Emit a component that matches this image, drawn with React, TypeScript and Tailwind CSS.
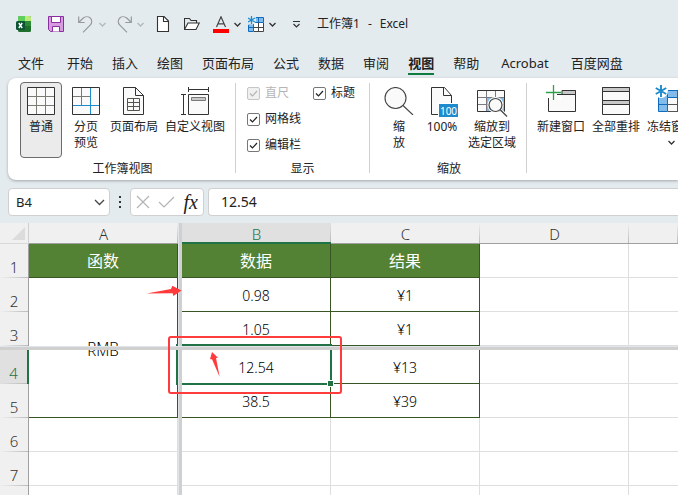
import { ReactNode } from "react";
import clsx from "clsx";

const tabs = ["文件", "开始", "插入", "绘图", "页面布局", "公式", "数据", "审阅", "视图", "帮助", "Acrobat", "百度网盘"];

const rows = [
  { n: 1, b: "数据", c: "结果" },
  { n: 2, b: "0.98", c: "¥1" },
  { n: 3, b: "1.05", c: "¥1" },
  { n: 4, b: "12.54", c: "¥13" },
  { n: 5, b: "38.5", c: "¥39" },
  { n: 6, b: "", c: "" },
  { n: 7, b: "", c: "" },
  { n: 8, b: "", c: "" },
];

function Chevron({ className = "text-[#333]" }: { className?: string }) {
  return (
    <svg className={className} width="7" height="7" viewBox="0 0 7 7" fill="none" stroke="currentColor" strokeWidth="1.3">
      <path d="M.5 2l3 3 3-3" />
    </svg>
  );
}

/* ---------- quick access icons ---------- */

function ExcelLogo() {
  return (
    <svg width="16" height="16" viewBox="0 0 16 16">
      <rect x="2" y="0" width="13" height="16" rx="1.5" fill="#1e6f2c" />
      <path d="M3.500 0H9v5H2V1.500A1.500 1.500 0 0 1 3.500 0z" fill="#5fce5a" />
      <path d="M9 0h4.500A1.500 1.500 0 0 1 15 1.500V5H9z" fill="#bdea7b" />
      <path d="M9 5h6v5H9z" fill="#2c8a36" />
      <rect x="0" y="5" width="9" height="9" rx="1.500" fill="#0d5434" />
      <path d="M2.800 7l3.400 5M6.200 7l-3.400 5" stroke="#fff" strokeWidth="1.400" />
    </svg>
  );
}

function SaveIcon() {
  return (
    <svg width="16" height="16" viewBox="0 0 16 16" fill="#d79be0" stroke="#8b2fa0">
      <path d="M.5.5h15v15H2.500l-2-2z" />
      <path d="M3.500.5h9v6h-9z" fill="#fff" />
      <path d="M4.500 15.500v-5h7v5" fill="#fff" />
    </svg>
  );
}

function UndoIcon({ flip }: { flip?: boolean }) {
  return (
    <svg className={clsx(flip && "-scale-x-100")} width="16" height="17" viewBox="0 0 16 17" fill="none" stroke="#969a9d" strokeWidth="1.200">
      <path d="M.7.5v6h6" />
      <path d="M.9 6.300L5 2.300C7 .4 10.200.200 12.200 2s2 4.900.200 6.800L5 16.300" />
    </svg>
  );
}

function NewFileIcon() {
  return (
    <svg width="16" height="16" viewBox="0 0 16 16" fill="#fff" stroke="#333" strokeWidth="1.100">
      <path d="M2.500.5H9l4.500 4.500v10.500h-11z" />
      <path d="M8.500.5v5h5" fill="none" />
    </svg>
  );
}

function OpenIcon() {
  return (
    <svg width="16" height="16" viewBox="0 0 16 16" fill="none" stroke="#333" strokeWidth="1.100">
      <path d="M.5 13.500v-11h5l1.500 2h5.500v2.500" />
      <path d="M.5 13.500l3.500-6.500h11.300l-3.300 6.500z" fill="#fff" />
    </svg>
  );
}

function FontColorIcon() {
  return (
    <svg width="16" height="17" viewBox="0 0 16 17">
      <path d="M3.500 11L8 .8 12.500 11M5 7.800h6" fill="none" stroke="#444" strokeWidth="1.200" />
      <rect y="13" width="16" height="4" fill="#f00" />
    </svg>
  );
}

function Snowflake({ x, y, r }: { x: number; y: number; r: number }) {
  return (
    <g transform={`translate(${x} ${y}) scale(${r})`} stroke="#1e8bcd" strokeWidth=".32">
      <path d="M0-1V1M-.87-.5L.87.5M-.87.5L.87-.5" />
    </g>
  );
}

function FreezeSmallIcon() {
  return (
    <svg width="16" height="16" viewBox="0 0 16 16">
      <path d="M1 1.500h14.500v5H5.500v8.500H.5V8z" fill="#83bceb" />
      <path d="M5.500 6.500h10v9h-10z" fill="#fff" />
      <path d="M8 1.500h7.500v5H5.500v9h-5V9M10.500 1.500v5M.5 11.500h5" fill="none" stroke="#0f6cbd" />
      <path d="M10.500 6.500v9M5.500 11.500h10M15.500 7v8.500H6" fill="none" stroke="#444" />
      <circle cx="3.500" cy="4" r="4.500" fill="#e4ebef" />
      <Snowflake x={3.5} y={4} r={4} />
    </svg>
  );
}

/* ---------- ribbon icons, all 28px high ---------- */

function NormalIcon() {
  return (
    <svg width="28" height="28" viewBox="0 0 28 28" fill="#fafafa">
      <path d="M.5.5h27v27H.5z" />
      <path d="M9.500 1v26M18.500 1v26M1 9.500h26M1 18.500h26" stroke="#7a7a72" />
      <path d="M.5.5h27v27H.5z" fill="none" stroke="#333" />
    </svg>
  );
}

function PageBreakIcon() {
  return (
    <svg width="28" height="28" viewBox="0 0 28 28" fill="#fafafa">
      <path d="M.5.5h27v27H.5z" />
      <path d="M9.500 1v17M1 9.500h17" stroke="#7a7a72" />
      <path d="M.5.5h27v27H.5z" fill="none" stroke="#333" />
      <path d="M18.500 1v26M1 18.500h26" stroke="#1e8bcd" />
    </svg>
  );
}

function PageLayoutIcon() {
  return (
    <svg width="28" height="28" viewBox="0 0 28 28" fill="#fafafa" stroke="#333">
      <path d="M3.500.5h12l8 8v19h-20z" />
      <path d="M15.500.5v8h8" fill="none" />
      <path d="M7.500 11.500h12v12h-12zM13.500 11.500v12M7.500 15.500h12M7.500 19.500h12" stroke="#55554e" />
    </svg>
  );
}

function CustomViewIcon() {
  return (
    <svg width="28" height="28" viewBox="0 0 28 28" fill="none" stroke="#333">
      <path d="M7.500 7.500h20v20h-20z" fill="#fafafa" />
      <path d="M10.500 10.500h14v3h-14z" fill="#c8c8c8" stroke="#7a7a7a" />
      <path d="M7.500 2.500h20M7.500 0v5M27.500 0v5M2.500 7.500v20M0 7.500h5M0 27.500h5" />
    </svg>
  );
}

function ZoomIcon() {
  return (
    <svg width="30" height="28" viewBox="0 0 30 28" fill="#fafafa" stroke="#444" strokeWidth="1.100">
      <circle cx="11.500" cy="11" r="10.500" />
      <path d="M19 18.500l10 9.500" />
    </svg>
  );
}

function Zoom100Icon() {
  return (
    <svg width="32" height="30" viewBox="0 0 32 30" fill="#fafafa" stroke="#333">
      <path d="M5.500 27.500V.5h13l7 8v19z" />
      <path d="M17.500.5v8h8" fill="none" />
      <path d="M12 16h20v14H12z" fill="#fff" stroke="none" />
      <path d="M13 17h19v13H13z" fill="#1e8bcd" stroke="none" />
      <text x="22.500" y="27.500" textAnchor="middle" fontSize="10" fill="#fff" stroke="none">100</text>
    </svg>
  );
}

function ZoomSelectionIcon() {
  return (
    <svg width="30" height="28" viewBox="0 0 30 28" fill="#fafafa" className="overflow-visible">
      <path d="M.5 3.500h27v21H.5z" />
      <path d="M10 10.500h17.500v14H10z" fill="#83bceb" />
      <path d="M9.500 3.500v21M18.500 3.500v21M.5 10.500h27M.5 17.500h27" stroke="#7a7a80" />
      <path d="M.5 3.500h27v21H.5z" fill="none" stroke="#333" />
      <circle cx="18.500" cy="18" r="8" fill="#fff" />
      <path d="M23.500 23l6.500 6" stroke="#fff" strokeWidth="3" />
      <circle cx="18.500" cy="18" r="6.500" stroke="#444" strokeWidth="1.200" />
      <path d="M23 22.500l7 7" stroke="#444" strokeWidth="1.300" />
    </svg>
  );
}

function NewWindowIcon() {
  return (
    <svg width="30" height="28" viewBox="0 0 30 28" fill="none" className="overflow-visible">
      <path d="M2.500 8v16.500h27v-21H10" fill="#fafafa" stroke="#333" />
      <path d="M0 0h16v13H0z" fill="#fff" />
      <path d="M16 3.500h13.500v4H16z" fill="#c8c8c8" stroke="#333" />
      <path d="M2.500 11v7M11 7.500h5" stroke="#333" />
      <path d="M7.500 -2v15M0 5.500h15" stroke="#2ea04a" strokeWidth="1.300" />
    </svg>
  );
}

function ArrangeIcon() {
  return (
    <svg width="28" height="28" viewBox="0 0 28 28" fill="#fafafa" stroke="#333">
      <path d="M.5.5h27v27H.5z" />
      <path d="M.5.5h27v4H.5zM.5 13.500h27v4H.5z" fill="#c8c8c8" />
    </svg>
  );
}

function FreezeIcon() {
  return (
    <svg width="32" height="28" viewBox="0 0 32 28" className="overflow-visible">
      <path d="M3.500 3.500h28v21h-28z" fill="#fafafa" />
      <path d="M3.500 3.500h28v7h-19v14h-9z" fill="#83bceb" />
      <path d="M3.500 10v14.500h9v-14h19v-7H9M12.500 10.500V3.500M22.500 3.500v7M3.500 17.500h9" fill="none" stroke="#0f6cbd" />
      <path d="M22.500 11v13.500M13 17.500h18.500M13 24.500h18.500V11" fill="none" stroke="#555" />
      <circle cx="6" cy="4" r="7" fill="#fff" />
      <Snowflake x={6} y={4} r={6} />
    </svg>
  );
}

interface RibbonButtonProps {
  icon: ReactNode;
  lines: string[];
  width: string;
  active?: boolean;
  menu?: boolean;
}

function RibbonButton({ icon, lines, width, active, menu }: RibbonButtonProps) {
  return (
    <button
      className={clsx(
        "flex h-[76px] shrink-0 flex-col items-center rounded border pt-1",
        width,
        active ? "border-[#6b6b6b] bg-[#ebebeb]" : "border-transparent"
      )}
    >
      <span className="flex h-8 justify-center">{icon}</span>
      {lines.map((l) => (
        <span key={l} className="text-xs leading-4 whitespace-nowrap">{l}</span>
      ))}
      {menu && <span className="mt-1"><Chevron /></span>}
    </button>
  );
}

function Group({ label, className, children }: { label?: string; className?: string; children: ReactNode }) {
  return (
    <section className={clsx("flex shrink-0 flex-col", className)}>
      <div className="flex h-[79px]">{children}</div>
      {label && <div className="text-center text-xs leading-4">{label}</div>}
    </section>
  );
}

function Divider() {
  return <div className="mt-px mb-1 w-px shrink-0 self-stretch bg-[#d0d0d0]" />;
}

function Check({ label, disabled }: { label: string; disabled?: boolean }) {
  return (
    <label className={clsx("flex h-[26px] items-center gap-[5px] text-xs", disabled && "text-[#b5b5b5]")}>
      <span className="grid place-items-center">
        <input
          type="checkbox"
          defaultChecked
          disabled={disabled}
          className={clsx(
            "col-start-1 row-start-1 size-[13px] appearance-none rounded-xs border",
            disabled ? "border-[#c6c6c6] bg-[#f0f0f0]" : "border-[#777] bg-white"
          )}
        />
        <svg className="pointer-events-none col-start-1 row-start-1" width="9" height="9" viewBox="0 0 9 9" fill="none" stroke="currentColor" strokeWidth="1.200">
          <path d="M1 4.500L3.500 7 8 2" />
        </svg>
      </span>
      {label}
    </label>
  );
}

function TitleBar() {
  return (
    <header className="flex h-12 items-center pl-4 text-xs">
      <ExcelLogo />
      <button aria-label="保存" className="ml-4"><SaveIcon /></button>
      <button aria-label="撤销" className="ml-[14px] flex items-center gap-[5px]">
        <UndoIcon />
        <Chevron className="text-[#b4b8ba]" />
      </button>
      <button aria-label="恢复" className="ml-[10px] flex items-center gap-[5px]">
        <UndoIcon flip />
        <Chevron className="text-[#b4b8ba]" />
      </button>
      <button aria-label="新建" className="ml-[11px]"><NewFileIcon /></button>
      <button aria-label="打开" className="ml-[13px]"><OpenIcon /></button>
      <button aria-label="字体颜色" className="ml-[13px] flex items-center gap-[5px]">
        <FontColorIcon />
        <Chevron />
      </button>
      <button aria-label="冻结窗格" className="ml-[7px] flex items-center gap-[5px]">
        <FreezeSmallIcon />
        <Chevron />
      </button>
      <button aria-label="自定义快速访问工具栏" className="ml-4">
        <svg width="9" height="9" viewBox="0 0 9 9" fill="none" stroke="#333" strokeWidth="1.200">
          <path d="M1 1.500h7M1.500 4l3 3 3-3" />
        </svg>
      </button>
      <h1 className="ml-4 flex gap-2">
        <span>工作簿1</span>
        <span>-</span>
        <span>Excel</span>
      </h1>
    </header>
  );
}

function FormulaBar() {
  return (
    <div className="mt-2 flex h-7 text-sm">
      <div className="ml-2 grid w-[102px] shrink-0 items-center">
        <select aria-label="名称框" className="col-start-1 row-start-1 h-7 appearance-none rounded border border-[#d0d0d0] bg-white pl-[7px] text-[13px]">
          <option>B4</option>
        </select>
        <svg className="pointer-events-none col-start-1 row-start-1 mr-[5px] justify-self-end" width="11" height="7" viewBox="0 0 11 7" fill="none" stroke="#444" strokeWidth="1.300">
          <path d="M1 1l4.500 4.500L10 1" />
        </svg>
      </div>
      <svg className="mr-2 ml-[9px] shrink-0 self-center" width="3" height="12" viewBox="0 0 3 12" fill="#333">
        <path d="M0 0h2v2H0zM0 5h2v2H0zM0 10h2v2H0z" />
      </svg>
      <div className="flex w-[74px] shrink-0 items-center justify-between rounded border border-[#d0d0d0] bg-white px-[5px]">
        <button aria-label="取消">
          <svg width="14" height="14" viewBox="0 0 14 14" stroke="#b4b4b4" strokeWidth="1.200"><path d="M1 1l12 12M13 1L1 13" /></svg>
        </button>
        <button aria-label="输入">
          <svg width="17" height="14" viewBox="0 0 17 14" fill="none" stroke="#b4b4b4" strokeWidth="1.200"><path d="M1 7l5 5L16 2" /></svg>
        </button>
        <button aria-label="插入函数" className="font-['Liberation_Serif',serif] text-xl leading-none text-[#222] italic">fx</button>
      </div>
      <input aria-label="编辑栏" defaultValue="12.54" className="ml-1 min-w-0 flex-1 rounded-l border border-r-0 border-[#d0d0d0] bg-white pl-3" />
    </div>
  );
}

function ColumnHead({ name, active }: { name: string; active?: boolean }) {
  return (
    <th
      className={clsx(
        "h-[21px] bg-linear-to-b from-transparent to-[#bbb] bg-[length:1px_100%] bg-right bg-no-repeat p-0 pt-0.5 align-top leading-[18px] font-light",
        active ? "border-b-2 border-[#217346] bg-[#e0e0e0] text-[#217346]" : "border-b border-[#a0a0a0] text-[#333]"
      )}
    >
      {/* the green underline is a pixel thicker, the row must not grow with it */}
      <div className="h-4">{name}</div>
    </th>
  );
}

function Selection() {
  return (
    <div className="pointer-events-none absolute -top-[6px] -right-0.5 -bottom-0.5 -left-[6px] border-2 border-[#217346]">
      <div className="absolute -right-1 -bottom-1 size-[7px] border border-white bg-[#217346]" />
    </div>
  );
}

function SplitColumn() {
  return <td className="relative z-10 border-l border-[#dfe5ea] bg-[#d0d0d0] p-0" />;
}

function Sheet() {
  const dark = "border-[#375623]";
  const light = "border-[#dedede]";

  return (
    <div className="relative mt-[7px] bg-white">
      <table className="w-full table-fixed border-separate border-spacing-0 text-center text-[15px] text-black">
        <colgroup>
          <col className="w-[29px]" />
          <col className="w-[149px]" />
          <col className="w-1" />
          <col className="w-[149px]" />
          <col className="w-[149px]" />
          <col className="w-[149px]" />
          <col />
        </colgroup>
        <thead className="bg-[#f0f0f0]">
          <tr>
            <th className="border-r border-b border-r-[#d0d0d0] border-b-[#d8d8d8] p-0">
              <svg className="ml-auto mr-[3px]" width="13" height="13" viewBox="0 0 13 13" fill="#dcdcdc">
                <path d="M13 0v13H0z" />
              </svg>
            </th>
            <ColumnHead name="A" />
            <SplitColumn />
            <ColumnHead name="B" active />
            <ColumnHead name="C" />
            <ColumnHead name="D" />
            <ColumnHead name="" />
          </tr>
        </thead>
        <tbody>
          {rows.map((r) => {
            const head = r.n === 1;
            const used = r.n <= 5;
            const cell = clsx(
              "border-r border-b p-0",
              used ? dark : light,
              head ? "bg-[#548235] text-base text-white" : "pt-0.5 text-sm font-light"
            );
            const row = (
              <tr key={r.n} className="h-[34px]">
                <th
                  className={clsx(
                    "bg-linear-to-r from-transparent to-[#bbb] bg-[length:100%_1px] bg-bottom bg-no-repeat p-0 pt-3 font-light leading-[22px]",
                    r.n === 4 ? "border-r-2 border-[#217346] bg-[#e0e0e0] text-[#217346]" : "border-r border-[#a0a0a0] bg-[#f0f0f0] text-[#333]"
                  )}
                >
                  {r.n}
                </th>
                {head && <td className={cell}>函数</td>}
                {/* the merged A2:A5 is cut in two by the split bar, each pane shows its half */}
                {r.n === 2 && (
                  <td rowSpan={2} className="border-r border-[#375623] p-0">
                    <div className="h-[68px] overflow-hidden">
                      <div className="flex h-[136px] items-center justify-center pt-0.5 font-light">RMB</div>
                    </div>
                  </td>
                )}
                {r.n === 4 && (
                  <td rowSpan={2} className="border-r border-b border-[#375623] p-0">
                    <div aria-hidden className="flex h-[67px] items-end overflow-hidden">
                      <div className="flex h-[135px] w-full shrink-0 items-center justify-center pt-0.5 font-light">RMB</div>
                    </div>
                  </td>
                )}
                {r.n > 5 && <td className={cell} />}
                <SplitColumn />
                <td className={clsx(cell, r.n === 4 && "relative")}>
                  {r.b}
                  {r.n === 4 && <Selection />}
                </td>
                <td className={cell}>{r.c}</td>
                <td className="border-r border-b border-[#dedede] p-0" />
                <td className="border-b border-[#dedede] p-0" />
              </tr>
            );
            if (r.n !== 3) return row;
            return [
              row,
              <tr key="split" className="h-1">
                <td colSpan={7} className="relative z-10 border-t border-[#dfe5ea] bg-[#d0d0d0] p-0" />
              </tr>,
            ];
          })}
        </tbody>
      </table>

      {/* red marks over the split bars */}
      <div className="pointer-events-none absolute top-[113px] left-[168px] z-20 h-[58px] w-[174px] rounded-[3px] border-2 border-[#ff3b3b]" />
      <svg className="pointer-events-none absolute top-[60px] left-[146px] z-20" width="80" height="96" viewBox="0 0 80 96" fill="#ff3b3b">
        <path d="M.5 10.500L25 6 26.300 2.700 35.500 7.500 27.300 13 26.700 10.300z" />
        <path d="M73.700 94L66 76.200 64 76.300 66 69 72 74.700 70 75z" />
      </svg>
    </div>
  );
}

export default function App() {
  return (
    <div className="h-screen overflow-hidden bg-[#e4ebef] font-['Noto_Sans','Noto_Sans_CJK_SC',sans-serif] text-[#222]">
      <TitleBar />
      <nav className="flex h-[30px] gap-[19px] pl-[18px] text-[13px] whitespace-nowrap">
        {tabs.map((t) => (
          <a
            key={t}
            href="#"
            className={clsx(
              "h-[27px] leading-[30px]",
              t === "文件" && "mr-1",
              t === "Acrobat" && "px-[3px]",
              t === "视图" && "border-b-2 border-[#107c41] font-bold"
            )}
          >
            {t}
          </a>
        ))}
      </nav>

      <div className="ml-2 flex h-[102px] overflow-hidden rounded-l-lg bg-white pt-1 pb-[3px] shadow-[0_1px_3px_rgba(0,0,0,0.3)]">
        <Group label="工作簿视图" className="pr-[10px] pl-3">
          <div className="flex gap-[7px]">
            <RibbonButton icon={<NormalIcon />} lines={["普通"]} width="w-[42px]" active />
            <RibbonButton icon={<PageBreakIcon />} lines={["分页", "预览"]} width="w-[34px]" />
            <RibbonButton icon={<PageLayoutIcon />} lines={["页面布局"]} width="w-12" />
            <RibbonButton icon={<CustomViewIcon />} lines={["自定义视图"]} width="w-[60px]" />
          </div>
        </Group>
        <Divider />
        <Group label="显示" className="w-[133px]">
          <div className="-mt-0.5 grid grid-cols-[66px_auto] content-start pl-[11px]">
            <Check label="直尺" disabled />
            <Check label="标题" />
            <Check label="网格线" />
            <span />
            <Check label="编辑栏" />
          </div>
        </Group>
        <Divider />
        <Group label="缩放" className="pr-[10px] pl-3">
          <div className="flex gap-[9px]">
            <RibbonButton icon={<ZoomIcon />} lines={["缩", "放"]} width="w-[34px]" />
            <RibbonButton icon={<Zoom100Icon />} lines={["100%"]} width="w-[34px]" />
            <RibbonButton icon={<ZoomSelectionIcon />} lines={["缩放到", "选定区域"]} width="w-12" />
          </div>
        </Group>
        <Divider />
        <Group className="pl-[10px]">
          <div className="flex gap-[7px]">
            <RibbonButton icon={<NewWindowIcon />} lines={["新建窗口"]} width="w-12" />
            <RibbonButton icon={<ArrangeIcon />} lines={["全部重排"]} width="w-12" />
            <RibbonButton icon={<FreezeIcon />} lines={["冻结窗格"]} width="w-12" menu />
          </div>
        </Group>
      </div>

      <FormulaBar />
      <Sheet />
    </div>
  );
}
